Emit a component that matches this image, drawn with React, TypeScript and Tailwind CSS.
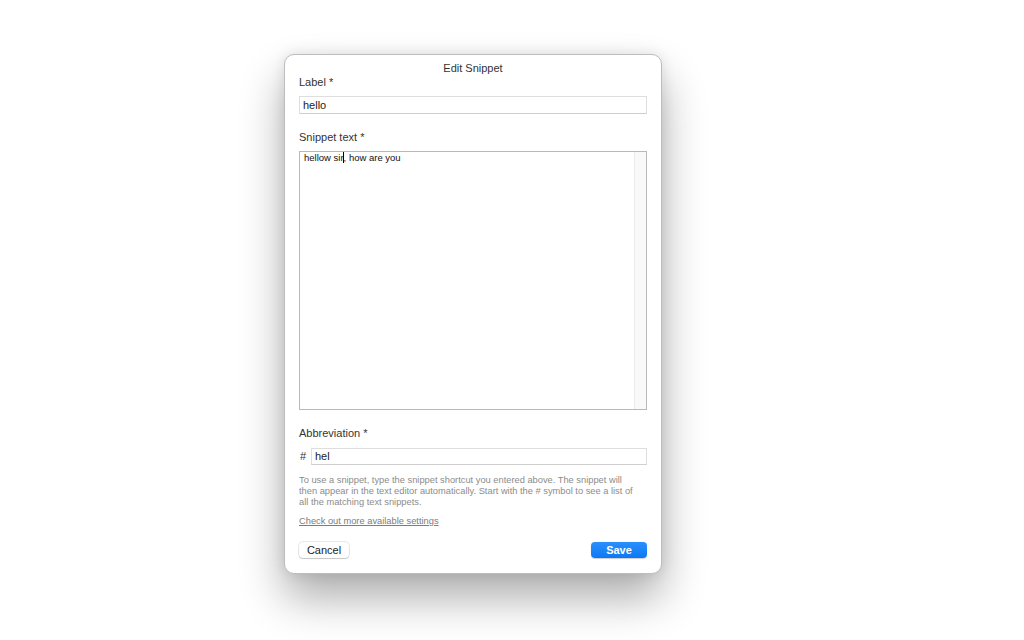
import React from 'react';

const font = { fontFamily: '"Liberation Sans", Arial, sans-serif' };

export default function App() {
  return (
    <div className="w-[1024px] h-[640px] bg-white overflow-hidden" style={font}>
      <div className="ml-[284px] mt-[54px] w-[378px] h-[520px] bg-white rounded-[10px] border border-[#bdbdbd] shadow-[0_24px_44px_rgba(0,0,0,0.32),0_0_14px_rgba(0,0,0,0.1)] px-[14px] pt-[6px] flex flex-col">
        {/* Title */}
        <div className="h-[14px] leading-[14px] text-[11px] text-[#333] text-center">Edit Snippet</div>

        {/* Label */}
        <div className="h-[14px] leading-[14px] text-[11px] text-[#333]">Label *</div>
        <div className="mt-[7px] h-[18px] border border-[#dedede] border-b-[#cfcfcf] bg-white px-[3px] text-[11px] leading-[16px] text-[#222]">
          hello
        </div>

        {/* Snippet text */}
        <div className="mt-[16px] h-[14px] leading-[14px] text-[11px] text-[#333]">Snippet text *</div>
        <div className="mt-[7px] h-[259px] border border-[#b9b9b9] bg-white flex">
          <div className="flex-1 px-[4px] pt-0 text-[9.5px] leading-[11px] text-[#111]">
            hellow sir<span className="inline-block w-px h-[11px] bg-black align-[-2px] -ml-[1px]" />, how are you
          </div>
          <div className="w-[12px] bg-[#f9f9f9] border-l border-[#ececec]" />
        </div>

        {/* Abbreviation */}
        <div className="mt-[16px] h-[14px] leading-[14px] text-[11px] text-[#333]">Abbreviation *</div>
        <div className="mt-[8px] h-[17px] flex items-center">
          <span className="w-[12px] text-[11px] text-[#333] pl-[1px]">#</span>
          <div className="flex-1 h-[17px] border border-[#dedede] border-b-[#cfcfcf] bg-white px-[3px] text-[11px] leading-[15px] text-[#222]">
            hel
          </div>
        </div>

        {/* Help */}
        <div className="mt-[10px] text-[9.3px] leading-[11px] text-[#8c8c8c] whitespace-nowrap">
          To use a snippet, type the snippet shortcut you entered above. The snippet will
          <br />
          then appear in the text editor automatically. Start with the # symbol to see a list of
          <br />
          all the matching text snippets.
        </div>
        <div className="mt-[7px] h-[12px] leading-[12px] text-[9.3px] text-[#7d7d7d] underline">
          Check out more available settings
        </div>

        {/* Buttons */}
        <div className="mt-[15px] flex justify-between">
          <button className="h-[16px] w-[50px] rounded-[4px] bg-white text-[11px] leading-[16px] text-[#222] shadow-[0_0_0_0.5px_rgba(0,0,0,0.18),0_1px_1px_rgba(0,0,0,0.15)]">
            Cancel
          </button>
          <button className="h-[16px] w-[56px] rounded-[4px] bg-gradient-to-b from-[#2a8ffd] to-[#0a78f5] text-[11px] leading-[16px] font-bold text-white shadow-[0_0.5px_1px_rgba(0,0,0,0.2)]">
            Save
          </button>
        </div>
      </div>
    </div>
  );
}
